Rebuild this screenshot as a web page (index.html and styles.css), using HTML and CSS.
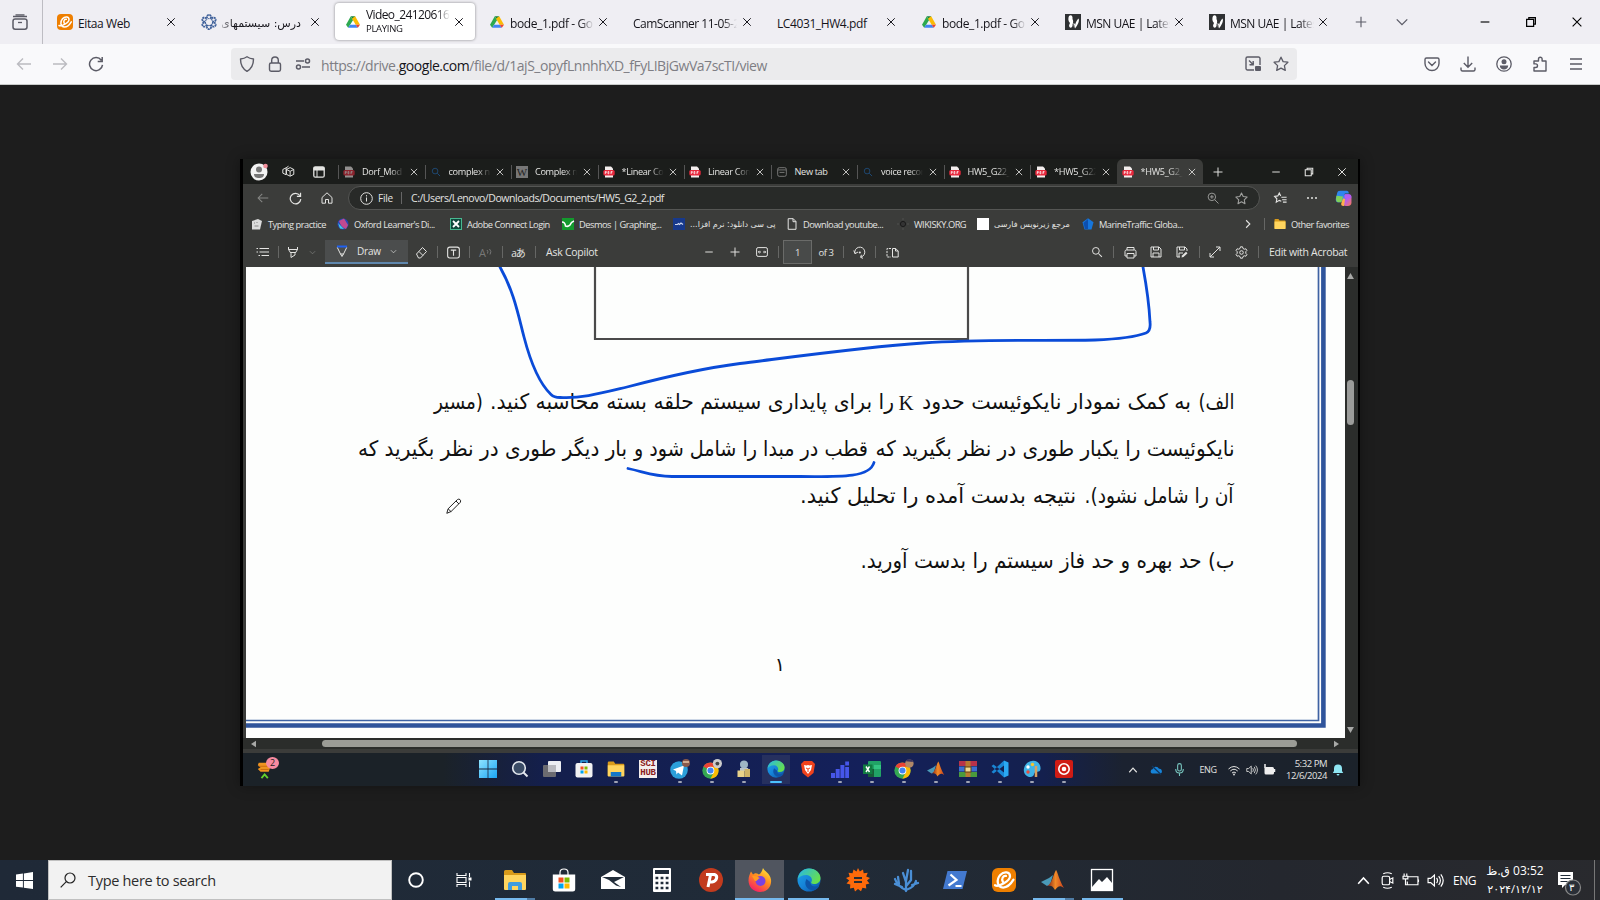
FILE: index.html
```html
<!DOCTYPE html>
<html lang="en">
<head>
<meta charset="utf-8">
<title>Video_24120616</title>
<link rel="stylesheet" href="styles.css">
</head>
<body>
<svg class="sprite" aria-hidden="true">
<defs>
<linearGradient id="gEdge" x1="0" y1="0" x2="1" y2="1"><stop offset="0" stop-color="#1fa6e8"/><stop offset=".5" stop-color="#1583d8"/><stop offset="1" stop-color="#0c4fa0"/></linearGradient>
<linearGradient id="gEdge2" x1="0" y1="0" x2="1" y2=".6"><stop offset="0" stop-color="#25b7ea"/><stop offset="1" stop-color="#67e04c"/></linearGradient>
<linearGradient id="gFox" x1=".8" y1="0" x2=".2" y2="1"><stop offset="0" stop-color="#ffe83c"/><stop offset=".45" stop-color="#ff8a1e"/><stop offset="1" stop-color="#f5156c"/></linearGradient>
<linearGradient id="gWin" x1="0" y1="0" x2="1" y2="1"><stop offset="0" stop-color="#8fe4ff"/><stop offset="1" stop-color="#1aa5f5"/></linearGradient>
<linearGradient id="gCop" x1="0" y1="0" x2="1" y2="1"><stop offset="0" stop-color="#2a8cf0"/><stop offset=".45" stop-color="#b65ef0"/><stop offset="1" stop-color="#ff7a50"/></linearGradient>
<linearGradient id="gMat" x1="0" y1="0" x2="1" y2="0"><stop offset="0" stop-color="#7a1a10"/><stop offset=".5" stop-color="#f08a28"/><stop offset="1" stop-color="#c8401c"/></linearGradient>
<symbol id="x" viewBox="0 0 16 16"><path d="M3 3l10 10M13 3L3 13" fill="none" stroke="currentColor" stroke-width="1.300"/></symbol>
<symbol id="plus" viewBox="0 0 16 16"><path d="M8 2v12M2 8h12" fill="none" stroke="currentColor" stroke-width="1.300"/></symbol>
<symbol id="minus" viewBox="0 0 16 16"><path d="M3 8h10" fill="none" stroke="currentColor" stroke-width="1.300"/></symbol>
<symbol id="down" viewBox="0 0 16 16"><path d="M2 5l6 6 6-6" fill="none" stroke="currentColor" stroke-width="1.500"/></symbol>
<symbol id="up" viewBox="0 0 16 16"><path d="M3 11l5-5.500 5 5.500" fill="none" stroke="currentColor" stroke-width="1.500"/></symbol>
<symbol id="right" viewBox="0 0 16 16"><path d="M5 2l6 6-6 6" fill="none" stroke="currentColor" stroke-width="1.700"/></symbol>
<symbol id="restore" viewBox="0 0 16 16"><path d="M3 5h8v8H3zM5.500 5V3H13v7.500h-2" fill="none" stroke="currentColor" stroke-width="1.400"/></symbol>
<symbol id="back" viewBox="0 0 16 16"><path d="M15 8H1.500M7 2.500L1.500 8 7 13.500" fill="none" stroke="currentColor" stroke-width="1.400"/></symbol>
<symbol id="fwd" viewBox="0 0 16 16"><path d="M1 8h13.500M9 2.500L14.500 8 9 13.500" fill="none" stroke="currentColor" stroke-width="1.400"/></symbol>
<symbol id="reload" viewBox="0 0 16 16"><path d="M13.300 4.300A6.500 6.500 0 1 0 14.500 8.800M14.200 1v4.500H9.700" fill="none" stroke="currentColor" stroke-width="1.500"/></symbol>
<symbol id="search" viewBox="0 0 16 16"><circle cx="6.500" cy="6.500" r="4.500" fill="none" stroke="currentColor" stroke-width="1.300"/><path d="M10 10l4.500 4.500" stroke="currentColor" stroke-width="1.400"/></symbol>
<symbol id="star" viewBox="0 0 16 16"><path d="M8 1.200l2.100 4.400 4.800.6-3.500 3.400.9 4.800L8 12.100l-4.300 2.300.9-4.800L1.100 6.200l4.800-.6z" fill="none" stroke="currentColor" stroke-width="1.300" stroke-linejoin="round"/></symbol>
<symbol id="drive" viewBox="0 0 16 14"><path d="M5.500.5h5L8 5z" fill="#188038"/><path d="M5.500.5L0 10l2.500 3.700L8 5z" fill="#2da94f"/><path d="M10.500.5L16 10h-5L6.900 3z" fill="#fbbc04"/><path d="M4.600 10H11l2.500 3.700h-11z" fill="#4285f4"/><path d="M11 10h5l-2.500 3.700z" fill="#ea4335"/></symbol>
<symbol id="eitaa" viewBox="0 0 16 16"><rect width="16" height="16" rx="4" fill="#ee7f00"/><path d="M2 11.500C4.500 13 12 8.500 12 5.500 12 2.500 8 2 5.500 4.700 2.800 7.700 3.300 13 7.500 13c3 0 5-2.200 6.800-5.200M7.300 9.300C6 7 7.500 5 9.300 5.300" fill="none" stroke="#fff" stroke-width="1.500" stroke-linecap="round"/></symbol>
<symbol id="flower" viewBox="0 0 16 16"><g fill="none" stroke="#3d5f99" stroke-width="1.800" stroke-dasharray="1.800 .5"><circle cx="8" cy="3" r="2.100"/><circle cx="12.600" cy="5.600" r="2.100"/><circle cx="12.600" cy="10.600" r="2.100"/><circle cx="8" cy="13" r="2.100"/><circle cx="3.400" cy="10.600" r="2.100"/><circle cx="3.400" cy="5.600" r="2.100"/></g><circle cx="8" cy="8" r="3" fill="#efeef3"/></symbol>
<symbol id="msn" viewBox="0 0 16 16"><rect width="16" height="16" fill="#2f3133"/><path d="M4 2c2-2 4 0 3.500 3 1 2 .8 4 0 5.500.6 2.500-2 4.500-3 2.500-1-1 0-3 .5-4C3 7.500 3 4 4 2zM13.500 4.500c1.500 2-1 7-3.500 10-.8-2 1-8 3.500-10zM8.500 9l1.500 1-1 4z" fill="#fff"/></symbol>
<symbol id="fx" viewBox="0 0 16 16"><path d="M1 2.500h14M3.500 0.800h9" stroke="currentColor" stroke-width="1.300"/><rect x="1" y="5" width="14" height="10.200" rx="2.200" fill="none" stroke="currentColor" stroke-width="1.500"/><path d="M6 8.500h4" stroke="currentColor" stroke-width="1.300"/></symbol>
<symbol id="shield" viewBox="0 0 16 16"><path d="M8 .8c2 1.500 4 2 6.500 2.200C14.500 9 12 13 8 15.300 4 13 1.500 9 1.500 3 4 2.800 6 2.300 8 .8z" fill="none" stroke="currentColor" stroke-width="1.400" stroke-linejoin="round"/></symbol>
<symbol id="lock" viewBox="0 0 16 16"><rect x="2.500" y="7" width="11" height="8.200" rx="1.600" fill="none" stroke="currentColor" stroke-width="1.400"/><path d="M4.700 7V4.300a3.300 3.300 0 0 1 6.600 0V7" fill="none" stroke="currentColor" stroke-width="1.400"/></symbol>
<symbol id="perm" viewBox="0 0 16 16"><g fill="none" stroke="currentColor" stroke-width="1.500"><path d="M1 5h8M7 11h8"/><circle cx="12.500" cy="5" r="2"/><circle cx="3.500" cy="11" r="2"/></g></symbol>
<symbol id="pip" viewBox="0 0 16 16"><path d="M15 9V2.500A1.500 1.500 0 0 0 13.500 1h-11A1.500 1.500 0 0 0 1 2.500v10A1.500 1.500 0 0 0 2.500 14H9M4 4.500l4 4M8.200 5v3.700H4.500" fill="none" stroke="currentColor" stroke-width="1.400"/><rect x="10" y="10" width="6" height="5" rx="1" fill="currentColor"/></symbol>
<symbol id="pocket" viewBox="0 0 16 16"><path d="M2.500 2h11A1.500 1.500 0 0 1 15 3.500V7.500a7 7 0 0 1-14 0v-4A1.500 1.500 0 0 1 2.500 2zM4.500 6L8 9.500 11.500 6" fill="none" stroke="currentColor" stroke-width="1.400" stroke-linecap="round"/></symbol>
<symbol id="dl" viewBox="0 0 16 16"><path d="M8 .5V11M3.800 7L8 11.200 12.200 7M1 11.500V13.700A1.500 1.500 0 0 0 2.500 15h11a1.500 1.500 0 0 0 1.500-1.300V11.500" fill="none" stroke="currentColor" stroke-width="1.400"/></symbol>
<symbol id="acct" viewBox="0 0 16 16"><circle cx="8" cy="8" r="7.200" fill="none" stroke="currentColor" stroke-width="1.300"/><circle cx="8" cy="5.800" r="2.500" fill="currentColor"/><path d="M3.800 9.500h8.400c0 2.600-2 4-4.200 4s-4.200-1.400-4.200-4z" fill="currentColor"/></symbol>
<symbol id="puzzle" viewBox="0 0 16 16"><path d="M2 15V11.500h1.700a1.800 1.800 0 0 0 0-3.600H2V5h4.500V3a1.800 1.800 0 0 1 3.600 0v2H14V15z" fill="none" stroke="currentColor" stroke-width="1.400" stroke-linejoin="round"/></symbol>
<symbol id="menu" viewBox="0 0 16 16"><path d="M2 3h12M2 8h12M2 13h12" stroke="currentColor" stroke-width="1.400"/></symbol>
<symbol id="pdf" viewBox="0 0 12 12"><path d="M2 .5h6l2 2v9H2z" fill="#f4eeee"/><rect x=".3" y="4" width="11.400" height="5.600" rx="1.500" fill="#e8283c"/><path d="M2.300 8V5.500h1v1.200h-1M5 5.500v2.300h.8V5.500zM8 8V5.500h1.500M8 6.700h1.200" fill="none" stroke="#fff" stroke-width=".7"/></symbol>
<symbol id="page" viewBox="0 0 12 12"><path d="M2.200.7h5L10 3.500v7.800H2.200zM7 .7v3h3" fill="none" stroke="currentColor" stroke-width="1"/></symbol>
<symbol id="folder" viewBox="0 0 24 22"><path d="M1 2.500A1.500 1.500 0 0 1 2.500 1H9l2 3H22a1 1 0 0 1 1 1v15H1z" fill="#d99b1a"/><path d="M1 6h22v14a1 1 0 0 1-1 1H2a1 1 0 0 1-1-1z" fill="#ffd55e"/></symbol>
<symbol id="edge" viewBox="0 0 24 24"><circle cx="12" cy="12" r="11.500" fill="url(#gEdge)"/><path d="M.8 11C2 4.500 6.500.5 12 .5c7 0 11.500 5 11.500 9.500 0 4-3 6-6.500 6-2.500 0-3.500-1-2.500-2.200C16 11 13.500 7 9.500 7 5 7 2 9 .8 11z" fill="url(#gEdge2)"/><path d="M9.500 11c-3 5 0 11 7 11.500 2.500-.5 5-2.500 6-5-4 2-9 1.500-9.300-3.500" fill="#0d55a8"/></symbol>
<symbol id="chrome" viewBox="0 0 24 24"><circle cx="12" cy="12" r="11.500" fill="#34a853"/><path d="M12 12L2 6.300A11.500 11.500 0 0 1 22 6.300z" fill="#ea4335"/><path d="M12 6.500h10.100A11.500 11.500 0 0 1 12 23.500L17 14z" fill="#fbbc04"/><circle cx="12" cy="12" r="5.500" fill="#fff"/><circle cx="12" cy="12" r="4.300" fill="#4285f4"/></symbol>
<symbol id="matlab" viewBox="0 0 24 24"><path d="M0 14l8-4 4-3-3 10-3 1z" fill="#4a9ab8"/><path d="M6 18c5-2 6-11 9-16 1 0 3 10 8 18-4-3-6-2-9 2-2-4-4-5-8-4z" fill="url(#gMat)"/></symbol>
<symbol id="sound" viewBox="0 0 16 16"><path d="M1 6h2.500L7 2.800v10.400L3.500 10H1zM9 5.500q1.800 2.500 0 5M11 3.800q3.200 4.200 0 8.400M13 2.200q4.500 5.800 0 11.600" fill="none" stroke="currentColor" stroke-width="1.100"/></symbol>
</defs>
</svg>

<header class="tabbar">
  <div class="fxview"><svg class="i16"><use href="#fx"/></svg></div>
  <div class="tabs">
    <div class="tab"><svg class="i16"><use href="#eitaa"/></svg><span class="tt">Eitaa Web</span><svg class="cl"><use href="#x"/></svg></div>
    <div class="tab"><svg class="i16"><use href="#flower"/></svg><span class="tt rtl" dir="rtl" lang="fa">درس: سیستمهای</span><svg class="cl"><use href="#x"/></svg></div>
    <div class="tab on"><svg class="i14"><use href="#drive"/></svg><span class="tt fade two"><b>Video_24120616</b><small>PLAYING</small></span><svg class="cl"><use href="#x"/></svg></div>
    <div class="tab"><svg class="i14"><use href="#drive"/></svg><span class="tt fade">bode_1.pdf - Go</span><svg class="cl"><use href="#x"/></svg></div>
    <div class="tab"><span class="tt fade wide">CamScanner 11-05-2</span><svg class="cl"><use href="#x"/></svg></div>
    <div class="tab"><span class="tt wide">LC4031_HW4.pdf</span><svg class="cl"><use href="#x"/></svg></div>
    <div class="tab"><svg class="i14"><use href="#drive"/></svg><span class="tt fade">bode_1.pdf - Go</span><svg class="cl"><use href="#x"/></svg></div>
    <div class="tab"><svg class="i16"><use href="#msn"/></svg><span class="tt fade msn">MSN UAE | Lates</span><svg class="cl"><use href="#x"/></svg></div>
    <div class="tab"><svg class="i16"><use href="#msn"/></svg><span class="tt fade msn">MSN UAE | Lates</span><svg class="cl"><use href="#x"/></svg></div>
  </div>
  <div class="tabend"><svg class="i14"><use href="#plus"/></svg><svg class="i14"><use href="#down"/></svg></div>
  <div class="winctl"><svg class="i14"><use href="#minus"/></svg><svg class="i14"><use href="#restore"/></svg><svg class="i14"><use href="#x"/></svg></div>
</header>
<nav class="toolbar">
  <div class="navbtns"><svg class="i16 dim"><use href="#back"/></svg><svg class="i16 dim"><use href="#fwd"/></svg><svg class="i16"><use href="#reload"/></svg></div>
  <div class="url">
    <svg class="i16"><use href="#shield"/></svg><svg class="i16"><use href="#lock"/></svg><svg class="i16"><use href="#perm"/></svg>
    <span class="addr">https://drive.<b>google.com</b>/file/d/1ajS_opyfLnnhhXD_fFyLIBjGwVa7scTI/view</span>
    <svg class="i16"><use href="#pip"/></svg><svg class="i16"><use href="#star"/></svg>
  </div>
  <div class="ext"><svg class="i16"><use href="#pocket"/></svg><svg class="i16"><use href="#dl"/></svg><svg class="i16"><use href="#acct"/></svg><svg class="i16"><use href="#puzzle"/></svg><svg class="i16"><use href="#menu"/></svg></div>
</nav>

<main class="stage">
<section class="video">
  <div class="etabs">
    <div class="elead">
      <svg class="i18" viewBox="0 0 18 18"><circle cx="9" cy="9" r="8.500" fill="#f3f3f3"/><circle cx="9" cy="6.500" r="3" fill="#777"/><path d="M4 11h10c0 3-2 4-5 4s-5-1-5-4z" fill="#777"/><circle cx="15.500" cy="3" r="2.300" fill="#f2909c"/></svg>
      <svg class="i13" viewBox="0 0 16 16"><path d="M1 5.500l4-2v8.500l-4-2zM5 3.500l3-2M5.500 5.500l4.500-2.300 4.500 2.300v6L10 13.800l-4.500-2.300zM5.500 5.500L10 7.800l4.500-2.300M10 8v5.500" fill="none" stroke="currentColor" stroke-width="1.200" stroke-linejoin="round"/></svg>
      <svg class="i12" viewBox="0 0 12 12"><rect x=".8" y=".8" width="10.400" height="10.400" rx="1.500" fill="none" stroke="currentColor" stroke-width="1.300"/><path d="M1 1.500h10V4H1zM4 4v7" stroke="currentColor" fill="currentColor"/></svg>
    </div>
    <div class="et"><svg class="i12 faint"><use href="#pdf"/></svg><span class="fade">Dorf_Mod</span><svg class="ecl"><use href="#x"/></svg></div>
    <div class="et"><svg class="i10 blue"><use href="#search"/></svg><span class="fade">complex n</span><svg class="ecl"><use href="#x"/></svg></div>
    <div class="et"><i class="wiki">W</i><span class="fade">Complex n</span><svg class="ecl"><use href="#x"/></svg></div>
    <div class="et"><svg class="i12"><use href="#pdf"/></svg><span class="fade">*Linear Co</span><svg class="ecl"><use href="#x"/></svg></div>
    <div class="et"><svg class="i12"><use href="#pdf"/></svg><span class="fade">Linear Con</span><svg class="ecl"><use href="#x"/></svg></div>
    <div class="et"><svg class="i10 gr" viewBox="0 0 12 12"><rect x=".8" y=".8" width="10.400" height="10.400" rx="2" fill="none" stroke="currentColor"/><path d="M1 3.500h10M3 6.500h6" stroke="currentColor"/></svg><span>New tab</span><svg class="ecl"><use href="#x"/></svg></div>
    <div class="et"><svg class="i10 blue"><use href="#search"/></svg><span class="fade">voice recor</span><svg class="ecl"><use href="#x"/></svg></div>
    <div class="et"><svg class="i12"><use href="#pdf"/></svg><span class="fade">HW5_G22_</span><svg class="ecl"><use href="#x"/></svg></div>
    <div class="et"><svg class="i12"><use href="#pdf"/></svg><span class="fade">*HW5_G22</span><svg class="ecl"><use href="#x"/></svg></div>
    <div class="et act"><svg class="i12"><use href="#pdf"/></svg><span class="fade">*HW5_G2_</span><svg class="ecl"><use href="#x"/></svg></div>
    <div class="enew"><svg class="i12"><use href="#plus"/></svg></div>
    <div class="ewin"><svg class="i12"><use href="#minus"/></svg><svg class="i12"><use href="#restore"/></svg><svg class="i12"><use href="#x"/></svg></div>
  </div>
  <div class="eaddr">
    <div class="c32 gr"><svg class="i12"><use href="#back"/></svg></div><div class="c32"><svg class="i13"><use href="#reload"/></svg></div>
    <div class="c32"><svg class="i12" viewBox="0 0 12 12"><path d="M1 5.500L6 .8l5 4.700v5.700H7.500V7.500h-3v3.700H1z" fill="none" stroke="currentColor" stroke-linejoin="round"/></svg></div>
    <div class="efield">
      <svg class="i13" viewBox="0 0 13 13"><circle cx="6.500" cy="6.500" r="5.800" fill="none" stroke="currentColor"/><path d="M6.500 5.500v4M6.500 3.200v1.200" stroke="currentColor"/></svg>
      <span class="efile">File</span><span class="epath">C:/Users/Lenovo/Downloads/Documents/HW5_G2_2.pdf</span>
      <svg class="i12" viewBox="0 0 16 16"><circle cx="6.500" cy="6.500" r="5" fill="none" stroke="currentColor" stroke-width="1.200"/><path d="M10.300 10.300l5 5M4 6.500h5M6.500 4v5" stroke="currentColor" stroke-width="1.200"/></svg>
      <svg class="i13"><use href="#star"/></svg>
    </div>
    <div class="c32"><svg class="i13" viewBox="0 0 16 16"><path d="M9 11.500L6.500 10.300 2.800 12.500l.7-4.200L.8 5.400l3.900-.6L6.500 1.200 8.300 4.800M9 6.500h6.500M10 9.500h5.500M11 12.500h4.500" fill="none" stroke="currentColor" stroke-width="1.400"/></svg></div>
    <div class="c32"><svg class="i12" viewBox="0 0 12 12"><circle cx="2" cy="6" r="1"/><circle cx="6" cy="6" r="1"/><circle cx="10" cy="6" r="1"/></svg></div>
    <div class="c30"><svg class="i17" viewBox="0 0 16 16"><rect x="7" y="4" width="8.500" height="11" rx="3.500" fill="url(#gCop)"/><path d="M5 .8h6c1.500 0 1.800 1 2 2.500H9.500C8 4 7.500 11 5.500 11.500H3C.5 11.500.5 9 1 7l1-4C2.500 1.500 3 .8 5 .8z" fill="#2f86ee"/><path d="M1.500 5.500l6 .5c-.4 2-.8 5-2 5.500H3C.5 11.500.8 8 1.500 5.500z" fill="#7fd05a"/><path d="M8 15c-2 0-2.500-1-2-3l1.500-4 2 .5L8.500 15z" fill="#ffb04a"/><path d="M9 4h4c2 0 2.800 1.500 2.300 3.500L13 8 9.500 7.500z" fill="#b45cf2"/></svg></div>
  </div>
  <div class="ebook">
    <a><svg class="i12" viewBox="0 0 12 12"><path d="M1 3l6-2 4 2-2 8.500H1z" fill="#ddd"/><path d="M3 5h1M5.500 4.500h1M3.500 8h4" stroke="#888"/></svg><span>Typing practice</span></a>
    <a><svg class="i12" viewBox="0 0 12 12"><circle cx="6" cy="6" r="5.500" fill="#2347b8"/><path d="M2 3l5-2.500L11 7 9 11C6 10 3 7 2 3z" fill="#c04a90"/><path d="M1 5l6 6-4-.6z" fill="#48c8e0"/></svg><span>Oxford Learner's Di...</span></a>
    <a><svg class="i12" viewBox="0 0 12 12"><rect x=".5" y=".5" width="11" height="11" fill="#10483c" stroke="#48b890"/><path d="M3 3l6 6M9 3L3 9" stroke="#fff" stroke-width="1.800"/></svg><span>Adobe Connect Login</span></a>
    <a><svg class="i12" viewBox="0 0 12 12"><rect width="12" height="12" fill="#139a2d"/><path d="M0 4q3 0 3.500 4Q6 9 8 7q1-3 4-4" fill="none" stroke="#fff" stroke-width="1.600"/></svg><span>Desmos | Graphing...</span></a>
    <a><svg class="i12" viewBox="0 0 12 12"><rect width="12" height="12" fill="#17398c"/><path d="M2 6.500h2.500l1-1 1 1 1.500-1.500 2 1.500" fill="none" stroke="#cdd6ee" stroke-width="1.200"/></svg><span class="fa1" dir="rtl" lang="fa">پی سی دانلود: نرم افزا...</span></a>
    <a><svg class="i12"><use href="#page"/></svg><span>Download youtube...</span></a>
    <a><svg class="i12" viewBox="0 0 12 12"><circle cx="6" cy="6" r="2.600" fill="#333" stroke="#1a1a1a"/><path d="M6 .5v1M6 10.500v1M.5 6h1M10.500 6h1" stroke="#666"/></svg><span>WIKISKY.ORG</span></a>
    <a><i class="white"></i><span class="fa2" dir="rtl" lang="fa">مرجع زیرنویس فارسی</span></a>
    <a><svg class="i12" viewBox="0 0 12 12"><path d="M6 .3l5.500 4-2 7.200h-7L.5 4.300z" fill="#1676dc"/><path d="M6 1v10H3L1.500 5z" fill="#0d4fae"/></svg><span>MarineTraffic: Globa...</span></a>
    <div class="chev"><svg class="i10"><use href="#right"/></svg></div><div class="sep"></div>
    <a class="of"><svg class="i12"><use href="#folder"/></svg><span>Other favorites</span></a>
  </div>
  <div class="epdf">
    <div><svg class="i13" viewBox="0 0 13 13"><path d="M3.500 2.500H13M3.500 6H13M5.500 9.500H13M.5 2.500h1.500M.5 6h1.500M2.500 9.500H4" stroke="currentColor" stroke-width="1.200"/></svg></div><div class="sep"></div>
    <div><svg class="i12" viewBox="0 0 12 12"><path d="M1.500 1v2.500L4 7.500v4L8 9V7.500l2.500-4V1M1.500 3.500h9M3.500 6.500h5" fill="none" stroke="currentColor"/></svg></div><div class="gr"><svg class="i7"><use href="#down"/></svg></div><div></div>
    <div class="draw"><svg class="i12" viewBox="0 0 12 12"><path d="M1 1.500h10" stroke="#1f60f0" stroke-width="2"/><path d="M1.300 2.500L4.500 9h3l3.200-6.500M4.500 9L6 11.500 7.500 9" fill="none" stroke="currentColor"/></svg><span>Draw</span><svg class="i7"><use href="#down"/></svg></div>
    <div><svg class="i13" viewBox="0 0 13 13"><path d="M1.500 8L7.500 1.500l4 4-6 6.500h-2zM4 5.500l4 4" fill="none" stroke="currentColor"/></svg></div><div class="sep"></div>
    <div><svg class="i13" viewBox="0 0 12 12"><rect x=".6" y="1" width="10.800" height="10" rx="2" fill="none" stroke="currentColor"/><path d="M3.500 3.800h5M6 4v5" stroke="currentColor"/></svg></div><div class="sep"></div>
    <div class="dimt">A<svg class="i7" viewBox="0 0 7 7"><path d="M1 2q1.500 1.500.5 3.500M3.500 1q2.500 2.500.5 5.500" fill="none" stroke="currentColor"/></svg></div><div class="sep"></div>
    <div class="aa">aあ</div><div class="sep"></div>
    <div class="ask">Ask Copilot</div>
    <div><svg class="i12"><use href="#minus"/></svg></div><div><svg class="i12"><use href="#plus"/></svg></div>
    <div><svg class="i12" viewBox="0 0 12 12"><rect x=".6" y="1.600" width="10.800" height="8.800" rx="1.500" fill="none" stroke="currentColor"/><path d="M2.500 6H5M9.500 6H7M3.500 4.800L2.300 6l1.200 1.200M8.500 4.800L9.700 6 8.500 7.200" fill="none" stroke="currentColor"/></svg></div><div class="sep"></div>
    <div class="pgin">1</div><div class="of3">of 3</div><div class="sep"></div>
    <div><svg class="i13" viewBox="0 0 13 13"><path d="M2 7.500A5 5 0 1 1 8 11M.8 4.500L2 7.700 5 6M8.500 8.800L7.500 11.300l2.500 1" fill="none" stroke="currentColor"/><circle cx="6.800" cy="6.500" r="1.100"/></svg></div><div class="sep"></div>
    <div><svg class="i13" viewBox="0 0 13 13"><path d="M6.500 2.500v8.500h5.700V5L9.700 2.500zM9.500 2.500V5H12" fill="none" stroke="currentColor"/><path d="M5 2.500H1v8.500h4" fill="none" stroke="currentColor" stroke-dasharray="2.200 1"/></svg></div><div></div>
    <div><svg class="i12"><use href="#search"/></svg></div><div class="sep"></div>
    <div><svg class="i13" viewBox="0 0 13 13"><path d="M3 4V1.500h7V4M3 10H1V5.500Q1 4 2.500 4h8Q12 4 12 5.500V10h-2M3 7.500h7V12H3z" fill="none" stroke="currentColor"/></svg></div>
    <div><svg class="i12" viewBox="0 0 12 12"><path d="M1 1h8l2 2v8H1zM3.500 1v3h5V1M3 11V7h6v4" fill="none" stroke="currentColor"/></svg></div>
    <div><svg class="i12" viewBox="0 0 12 12"><path d="M11 5V3L9 1H1v10h3M3.500 1v3h5V1M3 11V7h4" fill="none" stroke="currentColor"/><path d="M5.500 11.500L6 9.500 10 5.800l1.500 1.500-4 3.800z" fill="currentColor"/></svg></div><div class="sep"></div>
    <div><svg class="i12" viewBox="0 0 12 12"><path d="M1 11L11 1M7 1h4v4M1 7v4h4" fill="none" stroke="currentColor"/></svg></div>
    <div><svg class="i13" viewBox="0 0 13 13"><circle cx="6.500" cy="6.500" r="1.800" fill="none" stroke="currentColor"/><path d="M5.500.8h2l.5 1.700 1.300.7 1.600-.4 1 1.700-1.100 1.200v1.600l1.100 1.200-1 1.700-1.600-.4-1.300.7-.5 1.700h-2L5 10.500l-1.300-.7-1.600.4-1-1.700 1.100-1.200V5.700L1.100 4.500l1-1.700 1.600.4L5 2.500z" fill="none" stroke="currentColor"/></svg></div><div class="sep"></div>
    <div class="acro">Edit with Acrobat</div>
  </div>
  <div class="doc">
    <svg class="page" viewBox="246 267 1099 471" lang="fa">
      <path d="M595 267v72h373v-72" fill="none" stroke="#4a4a4a" stroke-width="2.200"/>
      <path d="M1318.500 267V720.500H246" fill="none" stroke="#3f63a3" stroke-width="1.700"/>
      <path d="M1323.400 267V725.500H246" fill="none" stroke="#2f549b" stroke-width="4.600"/>
      <g class="fa" direction="rtl">
        <text x="1234.500" y="409" textLength="36" lengthAdjust="spacingAndGlyphs">الف)</text>
        <text x="1191" y="409" textLength="269" lengthAdjust="spacingAndGlyphs">به کمک نمودار نایکوئیست حدود</text>
        <text x="894" y="409" textLength="404" lengthAdjust="spacingAndGlyphs">را برای پایداری سیستم حلقه بسته محاسبه کنید.</text>
        <text x="483" y="409" textLength="49" lengthAdjust="spacingAndGlyphs">(مسیر</text>
        <text x="1234.500" y="456" textLength="359" lengthAdjust="spacingAndGlyphs">نایکوئیست را یکبار طوری در نظر بگیرید که</text>
        <text x="868" y="456" textLength="234" lengthAdjust="spacingAndGlyphs">قطب در مبدا را شامل شود و</text>
        <text x="627" y="456" textLength="269" lengthAdjust="spacingAndGlyphs">بار دیگر طوری در نظر بگیرید که</text>
        <text x="1233.500" y="503" textLength="149" lengthAdjust="spacingAndGlyphs">آن را شامل نشود).</text>
        <text x="1076" y="503" textLength="276" lengthAdjust="spacingAndGlyphs">نتیجه بدست آمده را تحلیل کنید.</text>
        <text x="1234.500" y="568" textLength="374" lengthAdjust="spacingAndGlyphs">ب) حد بهره و حد فاز سیستم را بدست آورید.</text>
        <text x="785" y="671" font-size="19">۱</text>
      </g>
      <text class="k" x="898.500" y="410">K</text>
      <g fill="none" stroke="#0a4bd8" stroke-width="2.800" stroke-linecap="round" stroke-linejoin="round">
        <path d="M500 267C514 292 518 314 524 337C531 364 540 384 551 394.500Q554 397.500 560 397.500C580 399 602 393 627 387C665 377 705 368 740 363.500C800 356 865 347 923 343C985 339 1045 341 1095 340C1120 339 1138 336 1146 333Q1151 331 1150 322Q1149 300 1143 267"/>
        <path d="M628 468.500C645 472 652 476 672 476.500H800C845 477 870 477 874 462.500"/>
      </g>
      <path d="M446.800 513.300l1.300-4.500 9.300-9.200q1.500-1 2.600 0t.4 2.600l-9.300 9.300zM448.100 508.800l3 2.900M456 501l3 3" fill="#fff" stroke="#222" stroke-width="1"/>
    </svg>
    <div class="vscroll"><svg viewBox="0 0 8 7"><path d="M4 0l4 7H0z"/></svg><i></i><svg viewBox="0 0 8 7"><path d="M0 0h8L4 7z"/></svg></div>
  </div>
  <div class="hscroll"><svg viewBox="0 0 6 8"><path d="M6 0v8L0 4z"/></svg><i></i><svg viewBox="0 0 6 8"><path d="M0 0v8l6-4z"/></svg></div>
  <div class="wbar">
    <div class="widget"><svg viewBox="0 0 22 24"><path d="M3 5h11l2 4-2 6H5L2 12l3-2-3-2z" fill="#f09420"/><path d="M3 9h10M5 12.500h9" stroke="#c86a10"/><path d="M6 22l3.500-4 3.500 4" fill="none" stroke="#63d22c" stroke-width="2"/></svg><em>2</em></div>
    <div class="w"><svg viewBox="0 0 18 18"><path d="M0 0h8.600v8.600H0zM9.400 0H18v8.600H9.400zM0 9.400h8.600V18H0zM9.400 9.400H18V18H9.400z" fill="url(#gWin)"/></svg></div>
    <div class="w"><svg viewBox="0 0 18 18"><circle cx="8" cy="8" r="6.300" fill="#3b4c66" stroke="#e4e8ee" stroke-width="1.600"/><path d="M12.500 12.500l4 4" stroke="#e4e8ee" stroke-width="2"/></svg></div>
    <div class="w"><svg viewBox="0 0 18 18"><rect x="0" y="5" width="13" height="12" rx="1" fill="#6b6b70"/><rect x="5" y="1" width="13" height="11" rx="1" fill="#eceef2"/><path d="M5 5h8v7H5z" fill="#b8b9be"/></svg></div>
    <div class="w"><svg viewBox="0 0 18 18"><path d="M6 3V1h6v2" fill="none" stroke="#2ba4e6" stroke-width="1.500"/><rect x=".5" y="3" width="17" height="14.500" rx="2" fill="#f2f2f2"/><path d="M5.500 6.500h3v3h-3z" fill="#f25022"/><path d="M9.500 6.500h3v3h-3z" fill="#7fba00"/><path d="M5.500 10.500h3v3h-3z" fill="#00a4ef"/><path d="M9.500 10.500h3v3h-3z" fill="#ffb900"/></svg></div>
    <div class="w run"><svg viewBox="0 0 24 22"><use href="#folder"/><path d="M5 21v-6h14v6z" fill="#1277c8"/></svg></div>
    <div class="w"><div class="sci">SCI<br>HUB</div></div>
    <div class="w run"><svg class="big" viewBox="0 0 20 20"><circle cx="9" cy="11" r="8.800" fill="#2b9fda"/><path d="M3 10.500l11-4-2 10-4-3-1.500 2-.5-3.500z" fill="#fff"/><circle cx="16" cy="4" r="4" fill="#8a5a4a"/><path d="M13 3h6" stroke="#e8c8a8" stroke-width="1.500"/></svg></div>
    <div class="w run"><svg class="big" viewBox="0 0 26 26"><svg y="4" width="22" height="22"><use href="#chrome"/></svg><circle cx="20" cy="6" r="6" fill="#ccc"/><circle cx="20" cy="6" r="2.500" fill="#444"/></svg></div>
    <div class="w run"><svg viewBox="0 0 18 18"><circle cx="9" cy="4.500" r="4" fill="#9fb6c4"/><path d="M5 8h8l1 3H5z" fill="#b9c4c8"/><path d="M2.500 10.500h7V17h-7z" fill="#e8d28a"/><path d="M9.500 9H15v8H9.500z" fill="#cdb368"/></svg></div>
    <div class="w run cur"><svg><use href="#edge"/></svg></div>
    <div class="w"><svg viewBox="0 0 18 18"><path d="M5 1h8l3 3-1.500 9L9 17.500 3.500 13 2 4z" fill="#f0421c"/><path d="M5 5l2.500.5L9 5l1.500.5L13 5l-1 5-3 4-3-4z" fill="#fff"/><path d="M7 8l2 1 2-1M9 9v3" stroke="#f0421c" fill="none"/></svg></div>
    <div class="w run"><svg viewBox="0 0 18 18"><path d="M0 13h4v5H0zM4.700 9h4v9h-4zM9.400 5h4v13h-4zM14.200 7H18v11h-3.800zM14.200 1.500H18v4h-3.800z" fill="#4656ea"/></svg></div>
    <div class="w run"><svg viewBox="0 0 18 18"><rect x="5" y="1" width="13" height="16" rx="1" fill="#21a366"/><path d="M11 5h7v4h-7z" fill="#33c481"/><path d="M5 9h6v8H5z" fill="#185c37"/><rect y="4.500" width="9.500" height="9.500" fill="#107c41"/><path d="M3 6.500l3.500 5.500M6.500 6.500L3 12" stroke="#fff" stroke-width="1.400"/></svg></div>
    <div class="w run"><svg class="big" viewBox="0 0 26 26"><svg y="4" width="22" height="22"><use href="#chrome"/></svg><circle cx="20" cy="6" r="5.500" fill="#b08868"/><path d="M15 3l10 1-2-3-5-1z" fill="#3b3560"/></svg></div>
    <div class="w run"><svg><use href="#matlab"/></svg></div>
    <div class="w run"><svg viewBox="0 0 18 18"><path d="M0 1h18v5H0z" fill="#b8324a"/><path d="M0 6.500h18v5H0z" fill="#3c6fd0"/><path d="M0 12h18v5H0z" fill="#4a9a3c"/><path d="M6.500 1h5v16h-5z" fill="#b87a30"/><rect x="6" y="7" width="6" height="5" fill="#f0d890" stroke="#604010"/></svg></div>
    <div class="w run"><svg viewBox="0 0 18 18"><path d="M13 .5l4.500 2v13l-4.500 2z" fill="#2aa8f2"/><path d="M13 .5v5L2.500 13.500.5 12zM13 17.500v-5L2.500 4.500.5 6z" fill="#1a86d4"/></svg></div>
    <div class="w run"><svg viewBox="0 0 18 18"><path d="M9 1c6-1 9 4 8.500 8s-3 2-5 3-1 5-5 5C3 17 0 13 1 8.500S5 1.500 9 1z" fill="#3fb4e8"/><circle cx="5" cy="7" r="1.700" fill="#fff"/><circle cx="9.500" cy="4.500" r="1.700" fill="#f4c430"/><circle cx="5" cy="12" r="1.700" fill="#e84c3d"/><path d="M13 6v11" stroke="#d8a060" stroke-width="2.500"/></svg></div>
    <div class="w run"><svg viewBox="0 0 18 18"><rect width="18" height="18" rx="2" fill="#cf1b14"/><circle cx="9" cy="9" r="5.200" fill="none" stroke="#fff" stroke-width="1.600"/><circle cx="9" cy="9" r="2.300" fill="#fff"/></svg></div>
    <div class="wtray">
      <div><svg class="i12"><use href="#up"/></svg></div>
      <div><svg class="i12" viewBox="0 0 12 12"><path d="M2 9.500a2.200 2.200 0 0 1 .5-4.200A3.500 3.500 0 0 1 9 4.800a2.400 2.400 0 0 1 1 4.700z" fill="#1683d8"/><path d="M2 2l9 8.500" stroke="#12365e" stroke-width="1.200"/></svg></div>
      <div class="mic"><svg class="i13" viewBox="0 0 12 12"><rect x="4.300" y=".6" width="3.400" height="6.800" rx="1.700" fill="none" stroke="currentColor"/><path d="M2.500 5.500c0 5 7 5 7 0M6 9.500V12" fill="none" stroke="currentColor"/></svg></div>
      <div class="eng">ENG</div>
      <div><svg class="i12" viewBox="0 0 12 12"><path d="M.5 5q5.500-5 11 0M2.300 7q3.700-3.500 7.400 0M4 9q2-2 4 0" fill="none" stroke="currentColor"/><circle cx="6" cy="10.500" r=".9"/></svg></div>
      <div><svg class="i12"><use href="#sound"/></svg></div>
      <div><svg class="i12" viewBox="0 0 12 12"><rect x="1.500" y="3" width="9.500" height="7.500" rx="1.500" fill="#eee"/><path d="M2 0v4M11.500 5v3" stroke="#eee" stroke-width="1.500"/></svg></div>
      <div class="clock">5:32 PM<br>12/6/2024</div>
      <div class="bell"><svg class="i12" viewBox="0 0 12 12"><path d="M6 .5a4 4 0 0 1 4 4V7l1.200 2H.8L2 7V4.500a4 4 0 0 1 4-4zM4.500 10h3q-.5 1.500-1.500 1.500T4.500 10z" fill="currentColor"/></svg></div>
    </div>
  </div>
</section>
</main>

<footer class="taskbar">
  <div class="start"><svg viewBox="0 0 16 16"><path d="M0 2.300L6.500 1.400v6.200H0zM7.400 1.300L16 0v7.600H7.400zM0 8.500h6.500v6.200L0 13.800zM7.400 8.500H16V16l-8.600-1.200z" fill="#fff"/></svg></div>
  <div class="sbox"><svg viewBox="0 0 16 16"><circle cx="10" cy="6" r="5" fill="none" stroke="#222" stroke-width="1.200"/><path d="M6.300 9.700L.7 15.300" stroke="#222" stroke-width="1.200"/></svg><span>Type here to search</span></div>
  <div class="t48"><svg viewBox="0 0 16 16"><circle cx="8" cy="8" r="6.800" fill="none" stroke="#fff" stroke-width="1.900"/></svg></div>
  <div class="t48 tv"><svg viewBox="0 0 16 16"><path d="M1 1v2.500h9V1M1 15v-2.500h9V15M1 5.500h9v5H1zM13.500 1v4M13.500 9.500V15" fill="none" stroke="#fff" stroke-width="1.100"/><rect x="12.500" y="5.500" width="3" height="3" fill="#fff"/></svg></div>
  <div class="apps">
    <div class="app u multi"><svg viewBox="0 0 24 22"><use href="#folder"/><path d="M5 21v-6q0-2 2-2h10q2 0 2 2v6h-4v-4H9v4z" fill="#3f9ce0"/></svg></div>
    <div class="app"><svg viewBox="0 0 24 24"><path d="M8 7V4.500q0-3.500 4-3.500t4 3.500V7" fill="none" stroke="#fff" stroke-width="1.200"/><path d="M.8 6.500h22.400V21q0 2.500-2.500 2.500H3.300Q.8 23.500.8 21z" fill="#fff"/><path d="M6.500 9.500h5v5h-5z" fill="#f25022"/><path d="M12.500 9.500h5v5h-5z" fill="#7fba00"/><path d="M6.500 15.500h5v5h-5z" fill="#00a4ef"/><path d="M12.500 15.500h5v5h-5z" fill="#ffb900"/></svg></div>
    <div class="app"><svg viewBox="0 0 24 24"><path d="M0 9l12-7 12 7v12H0z" fill="#fff"/><path d="M1 9h22l-10 5 7 5-5-1.500L8 12z" fill="#222d3a"/></svg></div>
    <div class="app"><svg viewBox="0 0 24 24"><rect x="3" width="18" height="24" rx="1" fill="#fff"/><path d="M5 2h14v4H5z" fill="#222d3a"/><path d="M5.500 10h13M5.500 15h13M5.500 20h13" stroke="#222d3a" stroke-width="2.500" stroke-dasharray="2.800 2.300"/></svg></div>
    <div class="app"><svg viewBox="0 0 24 24"><circle cx="12" cy="12" r="12" fill="#c23b1e"/><path d="M9 19l2.500-12M7 6.500h8.500q3 1 2 4t-4.500 3.500h-3" fill="none" stroke="#fff" stroke-width="3"/></svg></div>
    <div class="app u foc"><svg viewBox="0 0 24 24"><path d="M15 0c1 3 7 5 8 11.500C24 19 18.500 24 12 24S.5 19 .5 12.500C.5 8 2 6 3 3.500l2 3C8 4 10 6 11 6.500c2-1 3-3.500 4-6.500z" fill="url(#gFox)"/><circle cx="12.500" cy="13" r="5" fill="#7a42e0"/><path d="M4 8c4-1 5 1 8 2-3 1-2 3-5 3z" fill="#ff9a20"/></svg></div>
    <div class="app u"><svg><use href="#edge"/></svg></div>
    <div class="app"><svg viewBox="0 0 24 24"><path d="M12 0l1.800 3.500L17 1.500l.7 3.800 4-.5-1.500 3.700L24 10l-3 2.500 2.500 3-3.700 1 .5 4-3.800-.8-1.500 3.500L12 21l-3 2.500-1.200-3.700-3.800.8.300-4L.5 15.500l2.700-3L0 10l3.700-1.500L2.500 4.800l4 .5L7.500 1.500l3 2z" fill="#ff6a0a"/><path d="M8 10h8M8 14h8" stroke="#2a2d34" stroke-width="2"/></svg></div>
    <div class="app"><svg viewBox="0 0 24 24"><path d="M12 23V13M12 22C7 20 3 17 1 11M12 22c6-2 9-5 10-9M5 16L4 9M12 14L9 5M13 17l4-5V3M18 17l6-2M12 13l2-11M8 19l-7-3" fill="none" stroke="#4a8fd6" stroke-width="2.300" stroke-linecap="round"/></svg></div>
    <div class="app"><svg viewBox="0 0 24 24"><path d="M4.500 3H24l-4.500 18H0z" fill="#4379cf"/><path d="M7.500 6.500l6 5.500-8 5.500M12.500 18h6" fill="none" stroke="#fff" stroke-width="2.200"/></svg></div>
    <div class="app"><svg><use href="#eitaa"/></svg></div>
    <div class="app u multi"><svg><use href="#matlab"/></svg></div>
    <div class="app u"><svg viewBox="0 0 24 24"><rect x="1.500" y="1.500" width="21" height="21" fill="none" stroke="#fff" stroke-width="1.300"/><path d="M2 19l7-8 3 3 5-5 5 6v7H2z" fill="#fff"/></svg></div>
  </div>
  <div class="tray">
    <div><svg viewBox="0 0 16 16"><use href="#up"/></svg></div>
    <div><svg viewBox="0 0 16 16"><rect x="3" y="4" width="7" height="8" rx="1.500" fill="none" stroke="#fff" stroke-width="1.100"/><path d="M10 7l3-1.500v5L10 9M4 1.700q4-2 8 0M4 14.300q4 2 8 0" fill="none" stroke="#fff" stroke-width="1.100"/></svg></div>
    <div><svg viewBox="0 0 16 16"><path d="M6 4.500h9v7.500H5V9M2 1.500v2.300M4.500 1.500v2.300M1 4h4.500v2.500H1zM3.300 6.500V12H5M15.500 7v2.500" fill="none" stroke="#fff" stroke-width="1.100"/></svg></div>
    <div><svg viewBox="0 0 16 16"><use href="#sound"/></svg></div>
    <div class="teng">ENG</div>
    <div class="tclk" lang="fa"><span dir="rtl">03:52 ق.ظ</span><span class="date" dir="ltr">۲۰۲۴/۱۲/۱۲</span></div>
    <div class="note"><svg viewBox="0 0 24 26"><path d="M1 2h15v13H8l-3 3v-3H1z" fill="#fff"/><path d="M3.500 5.500h10M3.500 8.500h10M3.500 11.500h7" stroke="#222d3a" stroke-width="1.200"/><circle cx="16" cy="17.500" r="7.500" fill="#2a2f37" stroke="#888" stroke-width="1.200"/></svg><em lang="fa">۳</em></div>
    <i class="peek"></i>
  </div>
</footer>
</body>
</html>
```

FILE: styles.css
```css
* { box-sizing: border-box; }
html, body { margin: 0; height: 900px; overflow: hidden; }
body { width: 1600px; display: flex; flex-direction: column; font-family: "Open Sans", "Noto Sans", "DejaVu Sans", sans-serif; background: #1d1d1d; color: #15141a; }
svg { display: block; flex: none; overflow: visible; fill: currentColor; }
b, em, i { font-weight: inherit; font-style: normal; }
.sprite { position: absolute; width: 0; height: 0; }
.i7 { width: 7px; height: 7px; } .i10 { width: 10px; height: 10px; } .i12 { width: 12px; height: 12px; } .i13 { width: 13px; height: 13px; }
.i14 { width: 14px; height: 14px; } .i16 { width: 16px; height: 16px; } .i17 { width: 17px; height: 17px; } .i18 { width: 18px; height: 18px; }
.fade { -webkit-mask-image: linear-gradient(90deg, #000 calc(100% - 14px), transparent); mask-image: linear-gradient(90deg, #000 calc(100% - 14px), transparent); }

/* Firefox tab strip */
.tabbar { height: 44px; flex: none; display: flex; align-items: stretch; background: #efeef3; }
.fxview { width: 43px; padding-left: 12px; display: flex; align-items: center; border-right: 1px solid #bdbcc2; color: #5b5b66; margin-right: 4px; }
.tabs { display: flex; }
.tab { width: 144px; padding: 0 14px 0 10px; display: flex; align-items: center; }
.tab .i16 { margin-right: 5px; } .tab .i14 { margin: 0 6px 0 1px; }
.tab.on { width: 140px; height: 37px; margin: 3px 4px 0 0; padding-right: 10px; background: #fff; border-radius: 4px; box-shadow: 0 0 3px rgba(0,0,0,.45); }
.tt { width: 84px; height: 18px; line-height: 19px; padding-top: 1px; font-size: 12px; letter-spacing: -.4px; white-space: nowrap; }
.tt.wide { width: 104px; }
.tt.wide.fade { letter-spacing: -.5px; }
.tt.msn { letter-spacing: -.5px; }
.tt.rtl { width: 79px; font-family: "DejaVu Sans", sans-serif; font-size: 11px; letter-spacing: 0; -webkit-mask-image: linear-gradient(270deg, #000 68px, transparent 84px); mask-image: linear-gradient(270deg, #000 68px, transparent 84px); }
.tt.two { height: 31px; line-height: 16px; display: flex; flex-direction: column; letter-spacing: -.6px; }
.tt.two small { font-size: 9.500px; line-height: 11px; letter-spacing: -.3px; }
.cl { width: 12px; height: 12px; margin-left: auto; }
.tabend { display: flex; align-items: center; gap: 27px; margin-left: 11px; color: #5b5b66; }
.winctl { display: flex; align-items: center; gap: 32px; margin-left: auto; padding-right: 16px; color: #000; }

/* Firefox toolbar */
.toolbar { height: 41px; flex: none; display: flex; align-items: center; background: #f9f9fb; border-bottom: 1px solid #c9cbca; color: #5b5b66; }
.navbtns { width: 231px; display: flex; padding-left: 16px; gap: 20px; }
.dim { color: #bbbbc0; }
.url { width: 1066px; height: 32px; background: #ebebed; border-radius: 4px; display: flex; align-items: center; gap: 12px; padding: 0 8px; }
.addr { flex: 1; font-size: 14px; letter-spacing: -.46px; color: #7e7e84; white-space: nowrap; margin-left: -2px; padding-top: 2px; }
.addr b { color: #15141a; }
.ext { display: flex; gap: 20px; margin-left: auto; padding-right: 16px; }

/* Video frame */
.stage { flex: 1; min-height: 0; background: #1d1d1d; padding: 74px 240px 0; }
.video { width: 1120px; height: 627px; border: solid #000; border-width: 0 2px 0 3px; background: #3b3c3a; color: #e4e4e2; display: flex; flex-direction: column; overflow: hidden; font-size: 9.500px; letter-spacing: -.2px; white-space: nowrap; box-shadow: 0 0 12px rgba(0,0,0,.35); }
.etabs { height: 25px; flex: none; display: flex; background: #1b1d1b; align-items: stretch; }
.elead { width: 95px; display: flex; align-items: center; padding-left: 7px; gap: 14px; }
.elead .i12 { margin-left: 4px; }
.et { width: 86.500px; display: flex; align-items: center; position: relative; padding: 0 6px 0 5px; background: linear-gradient(#555, #555) 0 50%/1px 14px no-repeat; }
.et span { width: 42px; margin-left: 7px; font-size: 9.200px; letter-spacing: -.35px; line-height: 13px; padding-bottom: 1px; }
.et .i10, .et .i10 + span { margin-left: 1px; } .et .i10 + span { margin-left: 8px; }
.et .ecl { width: 10px; height: 10px; margin-left: auto; }
.et.act { background: #3b3c3a; border-radius: 6px 6px 0 0; }
.faint { opacity: .55; } .blue { color: #1f4f80; } .gr { color: #858684; }
.wiki { width: 12px; height: 12px; background: #777; color: #222; font: 11px/12px "Liberation Serif", serif; text-align: center; letter-spacing: 0; }
.enew { width: 29px; display: grid; place-items: center; }
.ewin { display: flex; align-items: center; gap: 21px; margin-left: auto; padding-right: 10px; }
.eaddr { height: 28px; flex: none; display: flex; align-items: center; padding-left: 4px; }
.c32 { width: 32px; display: grid; place-items: center; } .c30 { width: 30px; display: grid; place-items: center; }
.efield { width: 912px; height: 24px; margin: 0 4px 0 5px; border: 1px solid #555654; border-radius: 12px; background: #282a28; display: flex; align-items: center; padding: 0 11px; }
.efile { width: 24px; margin-left: 5px; border-right: 1px solid #666; line-height: 12px; font-size: 10px; }
.epath { flex: 1; margin-left: 9px; font-size: 10.500px; letter-spacing: -.45px; }
.efield > .i12, .efield > .i13:last-child { color: #a0a19f; } .efield > .i12 { margin-right: 16px; }
.ebook { height: 26px; flex: none; display: grid; align-items: center; padding: 0 0 2px 8px; grid-template-columns: 86px 113px 112px 111px 113px 111px 80px 105px 156px 20px 12px 88px; }
.ebook a { display: flex; align-items: center; gap: 5px; font-size: 9.300px; letter-spacing: -.5px; }
.of { padding-left: 4px; }
.white { width: 12px; height: 12px; background: #fff; }
.fa1, .fa2 { font-family: "DejaVu Sans", sans-serif; font-size: 8px; letter-spacing: -.2px; }
.chev { display: grid; place-items: center; }
.sep { width: 1px; height: 12px; background: #666765; justify-self: center; }
.epdf { height: 29px; flex: none; display: grid; align-items: center; justify-items: center; padding: 0 0 1px 10px; grid-template-columns: 18px 14px 16px 22px 2px 83px 26px 6px 26px 6px 28px 4px 28px 6px 161px 20px 32px 22px 10px 29px 28px 6px 26px 6px 28px 178px 26px 6px 28px 24px 28px 6px 26px 26px 8px 96px; }
.draw { width: 83px; height: 24px; background: #4b4d4d; border-bottom: 2px solid #5f87ad; display: flex; align-items: center; padding-left: 11px; gap: 9px; font-size: 10px; }
.dimt { color: #777; font-size: 11px; display: flex; align-items: flex-start; }
.dimt svg { margin-top: 3px; }
.aa { font-family: "Open Sans", "Noto Sans CJK JP", sans-serif; font-size: 10px; letter-spacing: -1px; }
.ask { justify-self: start; padding-left: 8px; font-size: 10.500px; letter-spacing: -.25px; }
.pgin { width: 29px; height: 24px; background: #484a49; border: 1px solid #6a6b69; display: grid; place-items: center; }
.of3 { letter-spacing: -.4px; }
.acro { justify-self: start; padding-left: 7px; font-size: 10.500px; letter-spacing: -.3px; }

/* PDF page */
.doc { height: 471px; flex: none; display: flex; padding-left: 3px; }
.page { width: 1099px; height: 471px; background: #fdfefd; overflow: hidden; letter-spacing: 0; }
.fa { font-family: "DejaVu Sans", sans-serif; font-size: 21.500px; fill: #111; }
.k { font: 21px "Liberation Serif", serif; fill: #111; }
.vscroll { width: 13px; background: #2b2d2b; color: #a8a9a7; display: flex; flex-direction: column; align-items: center; padding: 6px 3px 5px 0; }
.vscroll svg { width: 7px; height: 6px; }
.vscroll i { width: 7px; height: 45px; margin: 101px 0 auto; border-radius: 4px; background: #9b9c9a; }
.hscroll { height: 15px; flex: none; display: flex; align-items: center; padding: 0 19px 4px 8px; background: linear-gradient(#2b2d2b 11px, #3b3c3a 11px); color: #a8a9a7; }
.hscroll svg { width: 5px; height: 8px; }
.hscroll i { width: 975px; height: 7px; border-radius: 4px; background: #9b9c96; margin: 0 auto 0 66px; }

/* Windows 11 taskbar inside the video */
.wbar { height: 33px; flex: none; display: flex; background: linear-gradient(90deg, #1b2228 0, #1b2228 200px, #141f4c 300px, #14205a 620px, #14204e 800px, #1b2230 880px, #1b222a); }
.widget { width: 229px; padding: 5px 0 0 13px; position: relative; }
.widget svg { width: 20px; height: 22px; }
.widget em { position: absolute; left: 23px; top: 4px; width: 13px; height: 12px; border-radius: 50%; background: #f78ba0; color: #222; font-size: 9px; line-height: 12px; text-align: center; }
.w { width: 32px; position: relative; display: grid; place-items: center; padding-bottom: 1px; }
.w svg { width: 18px; height: 18px; }
.w svg.big { width: 20px; height: 20px; }
.w svg svg { width: 22px; height: 22px; }
.w.run::after { content: ""; position: absolute; left: 14px; bottom: 3px; width: 4px; height: 2px; border-radius: 1px; background: #a0a4b4; }
.w.cur { background: linear-gradient(#26305e, #26305e) 50% 40%/28px 29px no-repeat; }
.w.cur::after { left: 10px; width: 12px; background: #4cc2ff; }
.sci { width: 18px; height: 18px; background: #f4eeee; color: #8a2020; font: bold 9px/9px "Liberation Mono", monospace; text-align: center; }
.wtray { margin-left: 41px; display: grid; grid-template-columns: 24px 22px 24px 34px 18px 17px 18px 49px 22px; align-items: center; justify-items: center; }
.mic { color: #79c7c0; } .bell { color: #8fe6f4; } .eng { font-size: 9px; letter-spacing: -.4px; }
.clock { justify-self: end; text-align: right; font-size: 9.500px; line-height: 12px; letter-spacing: -.45px; }

/* Windows 10 taskbar */
.taskbar { height: 40px; flex: none; display: flex; background: linear-gradient(90deg, #1f2937, #202b38 50%, #24272e 80%, #292a2e); color: #fff; }
.start { width: 48px; display: grid; place-items: center; } .start svg { width: 17px; height: 17px; }
.sbox { width: 344px; background: #f2f2f2; border: 1px solid #c0c0c0; display: flex; align-items: center; padding-left: 11px; color: #2c2c2c; }
.sbox svg { width: 16px; height: 16px; } .sbox span { margin-left: 12px; font-size: 14.500px; letter-spacing: -.3px; }
.t48 { width: 48px; display: grid; place-items: center; } .t48 svg { width: 16px; height: 16px; }
.apps { display: flex; margin-left: 2.500px; }
.app { width: 48.950px; display: grid; place-items: center; position: relative; } .app svg { width: 24px; height: 24px; }
.app.u::after { content: ""; position: absolute; left: 4px; right: 4px; bottom: 0; height: 2px; background: #76b9ed; }
.app.multi::after { background: linear-gradient(90deg, #76b9ed 32px, #4f7ca5 32px); }
.app.foc { background: #50555f; } .app.foc::after { left: 0; right: 0; }
.tray { margin-left: auto; display: grid; grid-template-columns: 24px 24px 23px 26px 33px 68px 40px 11px; align-items: center; justify-items: center; }
.tray svg { width: 17px; height: 17px; }
.teng { font-size: 12px; letter-spacing: -.5px; }
.tclk { display: flex; flex-direction: column; align-items: center; font: 12px/18px "Open Sans", "DejaVu Sans", sans-serif; letter-spacing: -.7px; }
.date { font-size: 11px; letter-spacing: -.9px; }
.note { position: relative; padding-top: 6px; } .note svg { width: 24px; height: 26px; }
.note em { position: absolute; left: 12px; top: 17px; font: 10px/13px "DejaVu Sans", sans-serif; }
.peek { width: 1px; height: 40px; background: #777; }
```
